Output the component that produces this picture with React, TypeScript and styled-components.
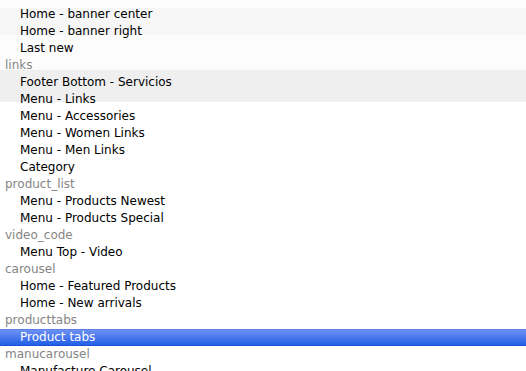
import * as React from 'react';
import styled, { createGlobalStyle } from 'styled-components';

interface OptionProps {
  readonly selected?: boolean;
}

type Group = { label?: string; options: string[] };

const groups: Group[] = [
  { options: ['Home - banner center', 'Home - banner right', 'Last new'] },
  {
    label: 'links',
    options: [
      'Footer Bottom - Servicios',
      'Menu - Links',
      'Menu - Accessories',
      'Menu - Women Links',
      'Menu - Men Links',
      'Category',
    ],
  },
  { label: 'product_list', options: ['Menu - Products Newest', 'Menu - Products Special'] },
  { label: 'video_code', options: ['Menu Top - Video'] },
  { label: 'carousel', options: ['Home - Featured Products', 'Home - New arrivals'] },
  { label: 'producttabs', options: ['Product tabs'] },
  { label: 'manucarousel', options: ['Manufacture Carousel'] },
];

const selectedOption = 'Product tabs';

const App = () => {
  return (
    <>
      <GlobalStyle />
      <Stage>
        {/* the page behind the open menu, seen through it */}
        <Backdrop aria-hidden>
          <Band tone="#fdfdfd" h={8} />
          <Band tone="#f6f6f6" h={27} />
          <Band tone="#fcfcfc" h={35} />
          <Band tone="#efefef" h={32} />
          <Band tone="#ffffff" h={269} />
        </Backdrop>
        <List>
          {groups.map((g, i) => (
            <React.Fragment key={i}>
              {g.label && <GroupLabel>{g.label}</GroupLabel>}
              {g.options.map((o) => (
                <Option key={o} selected={o === selectedOption}>
                  {o}
                </Option>
              ))}
            </React.Fragment>
          ))}
        </List>
      </Stage>
    </>
  );
};

const GlobalStyle = createGlobalStyle`
  html, body {
    margin: 0;
    padding: 0;
    background: #ffffff;
    overflow: hidden;
  }
`;

const Stage = styled.div`
  display: grid;
  width: 526px;
  height: 371px;
  overflow: hidden;
  & > * {
    grid-area: 1 / 1;
  }
`;

const Backdrop = styled.div`
  display: flex;
  flex-direction: column;
`;

const Band = styled.div<{ tone: string; h: number }>`
  flex: 0 0 ${(p) => p.h}px;
  background: ${(p) => p.tone};
`;

const List = styled.ul`
  list-style: none;
  margin: 0;
  padding: 6px 0 0;
  display: flex;
  flex-direction: column;
  font-family: 'DejaVu Sans', 'Liberation Sans', sans-serif;
  font-size: 12px;
`;

const GroupLabel = styled.li`
  height: 17px;
  line-height: 17px;
  padding-left: 5px;
  color: #858585;
  white-space: nowrap;
`;

const Option = styled.li<OptionProps>`
  box-sizing: border-box;
  height: 17px;
  padding-left: 20px;
  white-space: nowrap;
  color: ${(p) => (p.selected ? '#ffffff' : '#000000')};
  line-height: ${(p) => (p.selected ? '15px' : '17px')};
  background: ${(p) =>
    p.selected
      ? 'linear-gradient(to bottom, #6c90f2 0%, #4a78ee 50%, #2160e8 100%)'
      : 'transparent'};
  border-top: ${(p) => (p.selected ? '1px solid #5d80e4' : '0')};
  border-bottom: ${(p) => (p.selected ? '1px solid #1b52d0' : '0')};
`;

export default App;
